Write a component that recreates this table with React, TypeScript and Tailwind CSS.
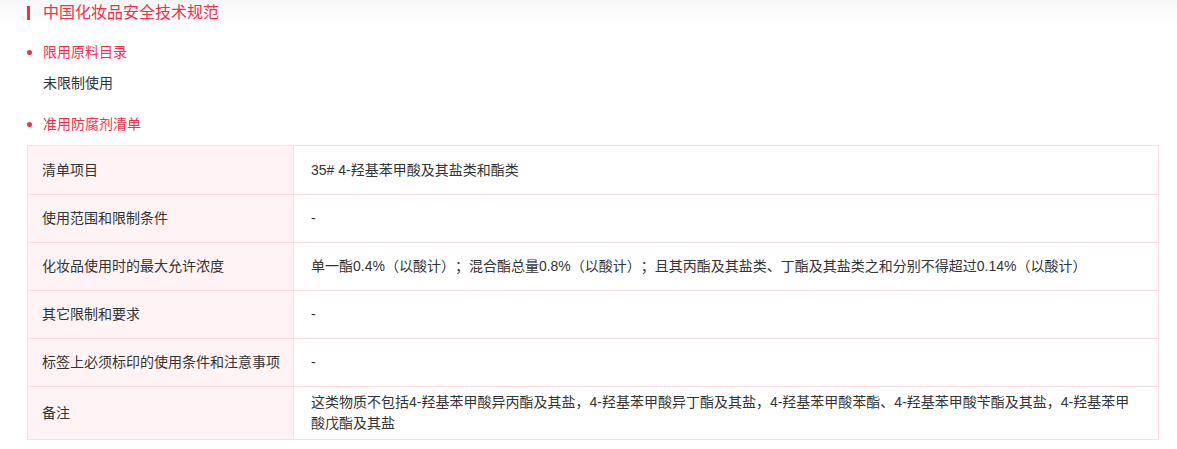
import React from "react";

const rows: { label: string; value: string }[] = [
  { label: "清单项目", value: "35# 4-羟基苯甲酸及其盐类和酯类" },
  { label: "使用范围和限制条件", value: "-" },
  {
    label: "化妆品使用时的最大允许浓度",
    value: "单一酯0.4%（以酸计）；混合酯总量0.8%（以酸计）；且其丙酯及其盐类、丁酯及其盐类之和分别不得超过0.14%（以酸计）",
  },
  { label: "其它限制和要求", value: "-" },
  { label: "标签上必须标印的使用条件和注意事项", value: "-" },
  {
    label: "备注",
    value: "这类物质不包括4-羟基苯甲酸异丙酯及其盐，4-羟基苯甲酸异丁酯及其盐，4-羟基苯甲酸苯酯、4-羟基苯甲酸苄酯及其盐，4-羟基苯甲酸戊酯及其盐",
  },
];

function Bullet({ children }: { children: React.ReactNode }) {
  return (
    <div className="flex items-center text-[14px] leading-[21px] text-[#f0304a]">
      <span className="w-[5px] h-[5px] rounded-full bg-[#f0304a] mr-[11px]" />
      {children}
    </div>
  );
}

export default function App() {
  return (
    <div className="w-[1177px] h-[449px] overflow-hidden bg-[linear-gradient(to_bottom,#f7f7f7,#ffffff_26px)] pl-[27px] pr-[18px] pt-[1px] font-['Liberation_Sans','Noto_Sans_CJK_SC',sans-serif] text-[#333] [text-spacing-trim:space-all]">
      {/* title */}
      <div className="flex items-center h-[24px]">
        <span className="w-[3px] h-[14px] bg-[#f0304a] mr-[13px]" />
        <span className="text-[16px] text-[#f0304a]">中国化妆品安全技术规范</span>
      </div>

      <div className="mt-[17px]">
        <Bullet>限用原料目录</Bullet>
      </div>
      <div className="mt-[10px] pl-[16px] text-[14px] leading-[21px] text-[#333]">未限制使用</div>

      <div className="mt-[20px]">
        <Bullet>准用防腐剂清单</Bullet>
      </div>

      {/* table */}
      <div className="mt-[10px] border border-[#fddde2] text-[14px] leading-[21px]">
        {rows.map((r, i) => (
          <div
            key={r.label}
            className={`grid grid-cols-[266px_1fr] min-h-[48px] ${i > 0 ? "border-t border-[#fddde2]" : ""}`}
          >
            <div className="flex items-center bg-[#fff3f5] border-r border-[#fddde2] pl-[14px] py-[5px]">
              {r.label}
            </div>
            <div className="flex items-center pl-[17px] pr-[24px] py-[5px]">{r.value}</div>
          </div>
        ))}
      </div>
    </div>
  );
}
